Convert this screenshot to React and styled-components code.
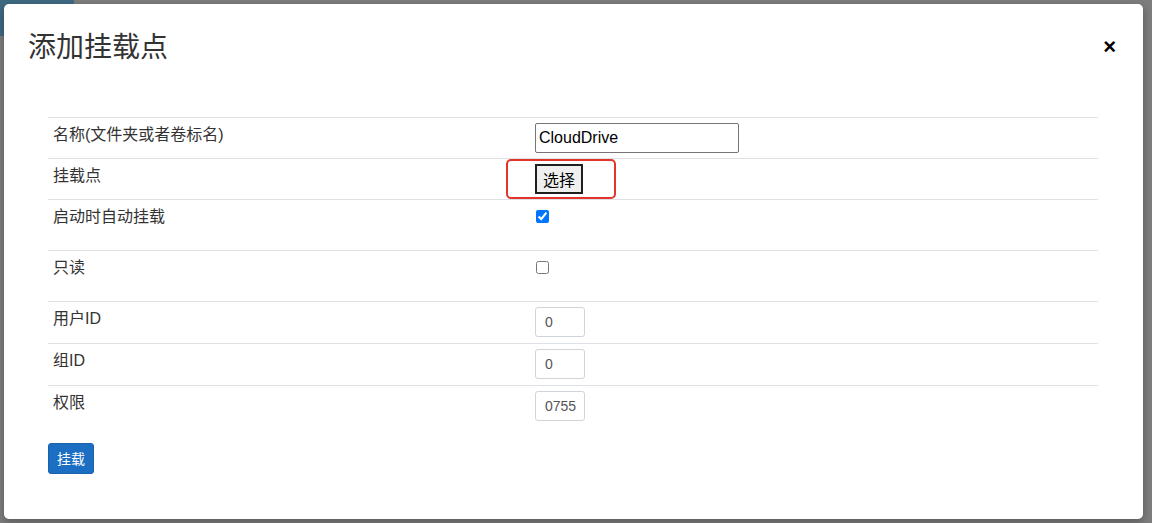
import React from 'react';
import styled, { createGlobalStyle } from 'styled-components';

const GlobalStyle = createGlobalStyle`
  html, body { margin: 0; padding: 0; background: #7d7d7d; }
  * { box-sizing: border-box; }
`;

const Backdrop = styled.div`
  position: relative;
  width: 1152px;
  height: 523px;
  padding: 4px;
  background: #7d7d7d;
  overflow: hidden;
  font-family: "Liberation Sans", "Noto Sans CJK SC", sans-serif;
`;

const PageTab = styled.div`
  position: absolute;
  left: 0;
  top: 0;
  width: 74px;
  height: 36px;
  background: #3e6a82;
`;

const Modal = styled.div`
  position: relative;
  width: 1139px;
  height: 515px;
  background: #fff;
  border-radius: 5px;
  box-shadow: 0 3px 9px rgba(0, 0, 0, 0.3);
  display: flex;
  flex-direction: column;
`;

const Header = styled.div`
  display: flex;
  align-items: center;
  justify-content: space-between;
  padding: 21px 27px 0 24px;
`;

const Title = styled.h3`
  margin: 0;
  font-family: "Noto Sans CJK SC", sans-serif;
  font-size: 28px;
  line-height: 40px;
  font-weight: 400;
  color: #333;
`;

const Close = styled.button`
  border: 0;
  background: none;
  padding: 3px 0 0;
  font-family: "Liberation Sans", sans-serif;
  font-size: 22px;
  font-weight: 700;
  line-height: 1;
  color: #000;
  cursor: pointer;
`;

const Body = styled.div`
  display: flex;
  flex-direction: column;
  align-items: flex-start;
  padding: 52px 45px 0 44px;
`;

const Table = styled.div`
  display: flex;
  flex-direction: column;
  width: 100%;
`;

const Row = styled.div`
  display: grid;
  grid-template-columns: 482px 1fr;
  height: ${p => p.$h}px;
  border-top: 1px solid #dee2e6;
`;

const Label = styled.div`
  padding: 5px;
  font-size: 16px;
  line-height: 24px;
  color: #333;
`;

const Value = styled.div`
  position: relative;
  padding: 5px;
`;

const TextInput = styled.input`
  display: block;
  width: 204px;
  height: 30px;
  border: 1px solid #767676;
  border-radius: 2px;
  padding: 1px 3px;
  font-family: "Liberation Sans", "Noto Sans CJK SC", sans-serif;
  font-size: 16px;
  color: #000;
  outline: none;
`;

const SelectButton = styled.button`
  display: block;
  height: 30px;
  padding: 0 6px;
  border: 2px solid #1f1f1f;
  border-radius: 0;
  background: #efefef;
  font-family: "Noto Sans CJK SC", sans-serif;
  font-size: 16px;
  line-height: 26px;
  color: #000;
`;

const Highlight = styled.div`
  position: absolute;
  left: -24px;
  top: 0;
  width: 110px;
  height: 40px;
  border: 2px solid #e3342b;
  border-radius: 5px;
  pointer-events: none;
`;

const Check = styled.input`
  display: block;
  width: 13px;
  height: 13px;
  margin: 5px 0 0 1px;
`;

const SmallInput = styled.input`
  display: block;
  width: 50px;
  height: 30px;
  border: 1px solid #ced4da;
  border-radius: 3px;
  padding: 0 8px 0 9px;
  font-family: "Liberation Sans", sans-serif;
  font-size: 14px;
  color: #555;
  outline: none;
`;

const PrimaryButton = styled.button`
  margin-top: 16px;
  padding: 4px 8px;
  border: 1px solid #1861ac;
  border-radius: 3px;
  background: #1b6ec2;
  color: #fff;
  font-family: "Noto Sans CJK SC", sans-serif;
  font-size: 14px;
  line-height: 21px;
  cursor: pointer;
`;

export default function App() {
  return (
    <>
      <GlobalStyle />
      <Backdrop>
        <PageTab />
        <Modal>
          <Header>
            <Title>添加挂载点</Title>
            <Close aria-label="Close">×</Close>
          </Header>
          <Body>
            <Table>
              <Row $h={41}>
                <Label>名称(文件夹或者卷标名)</Label>
                <Value>
                  <TextInput defaultValue="CloudDrive" />
                </Value>
              </Row>
              <Row $h={41}>
                <Label>挂载点</Label>
                <Value>
                  <SelectButton>选择</SelectButton>
                  <Highlight />
                </Value>
              </Row>
              <Row $h={51}>
                <Label>启动时自动挂载</Label>
                <Value>
                  <Check type="checkbox" defaultChecked />
                </Value>
              </Row>
              <Row $h={51}>
                <Label>只读</Label>
                <Value>
                  <Check type="checkbox" />
                </Value>
              </Row>
              <Row $h={42}>
                <Label>用户ID</Label>
                <Value>
                  <SmallInput defaultValue="0" />
                </Value>
              </Row>
              <Row $h={42}>
                <Label>组ID</Label>
                <Value>
                  <SmallInput defaultValue="0" />
                </Value>
              </Row>
              <Row $h={42}>
                <Label>权限</Label>
                <Value>
                  <SmallInput defaultValue="0755" />
                </Value>
              </Row>
            </Table>
            <PrimaryButton>挂载</PrimaryButton>
          </Body>
        </Modal>
      </Backdrop>
    </>
  );
}
